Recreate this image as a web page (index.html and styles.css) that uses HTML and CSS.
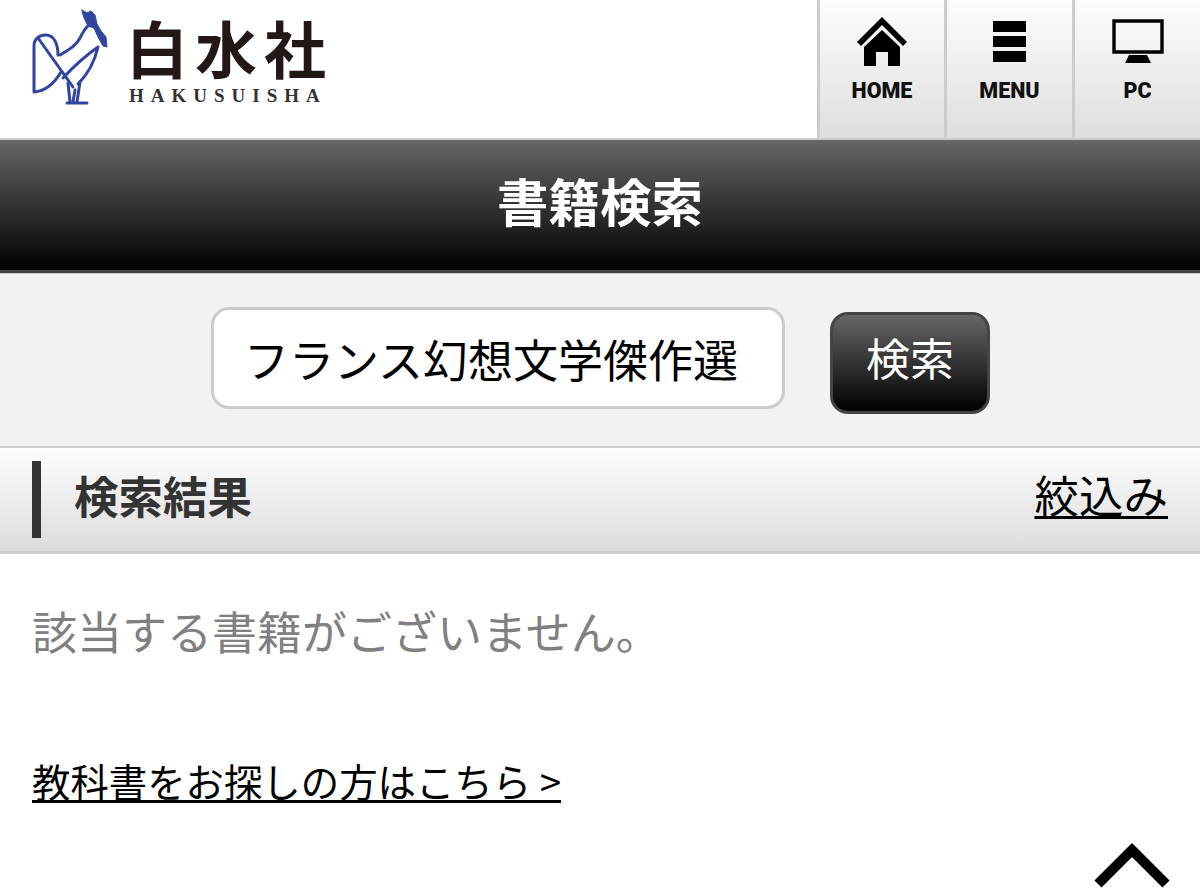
FILE: index.html
```html
<!DOCTYPE html>
<html lang="ja">
<head>
<meta charset="utf-8">
<title>書籍検索 | 白水社</title>
<link rel="stylesheet" href="styles.css">
</head>
<body>
<header class="site-header">
  <a class="logo" href="#">
    <svg class="logo-mark" width="78" height="98" viewBox="31 8 78 98" fill="none" stroke="#2f45a0" stroke-width="3" stroke-linejoin="round" stroke-linecap="round">
      <path d="M34 91 V46 C34 39 39 35 46 35 C54 35 58 44 58 55 M34 92 C46 91 54 84 61 72 M38 38 L73 87"/>
      <path d="M60 55 C68 50 76 46 80 38 C83 32 85 28 88 26"/>
      <path d="M98 47 C95 60 88 74 78 84 M98 47 C88 54 76 64 63 78"/>
      <path d="M68 83 L70 102 M75 90 L73 102 M80 82 L77 102 M67 103 H75 M77 103 H87"/>
      <path fill="#2f45a0" stroke-width="1" d="M82 10 L87 13 L91 11 L95 15 L97 24 L101 31 L106 37 L107 47 L103 46 L98 37 L94 28 L88 26 L84 18 Z"/>
    </svg>
    <div class="logo-text">
      <div class="logo-kanji">白水社</div>
      <div class="logo-roman">HAKUSUISHA</div>
    </div>
  </a>
  <nav class="top-nav">
    <a class="nav-item" href="#">
      <svg width="52" height="50" viewBox="0 0 52 50"><path fill="#000" d="M26 0 L51 25 L47 29 L26 8 L5 29 L1 25 Z"/><path fill="#000" d="M26 13 L44 30 L44 49 L32 49 L32 35 L20 35 L20 49 L8 49 L8 30 Z"/></svg>
      <span class="nav-label">HOME</span>
    </a>
    <a class="nav-item" href="#">
      <svg width="34" height="42" viewBox="0 0 34 42"><path fill="#000" d="M0 0H33V11H0ZM0 15H33V26H0ZM0 30H33V41H0Z"/></svg>
      <span class="nav-label">MENU</span>
    </a>
    <a class="nav-item" href="#">
      <svg width="52" height="46" viewBox="0 0 52 46"><path fill="none" stroke="#000" stroke-width="3.4" d="M2 2H50V33H2Z"/><path fill="#000" d="M17 36H35L39 44H13Z"/></svg>
      <span class="nav-label">PC</span>
    </a>
  </nav>
</header>

<h1 class="page-title">書籍検索</h1>

<form class="search-form">
  <input class="search-input" type="text" value="フランス幻想文学傑作選">
  <button class="search-button" type="button">検索</button>
</form>

<div class="result-bar">
  <h2 class="result-title">検索結果</h2>
  <a class="filter-link" href="#">絞込み</a>
</div>

<main class="content">
  <p class="no-result">該当する書籍がございません。</p>
  <a class="textbook-link" href="#">教科書をお探しの方はこちら &gt;</a>
  <div class="to-top">
    <svg width="76" height="48" viewBox="0 0 76 48"><path fill="none" stroke="#000" stroke-width="10" d="M4 43 L38 9 L72 43"/></svg>
  </div>
</main>
</body>
</html>
```
FILE: styles.css
```css
* { box-sizing: border-box; }
html, body { margin: 0; padding: 0; }
body {
  height: 894px;
  overflow: hidden;
  background: #fff;
  color: #000;
  font-family: "Noto Sans CJK JP", "Noto Sans", sans-serif;
}
a { color: inherit; }

.site-header {
  display: flex;
  justify-content: space-between;
  height: 140px;
  border-bottom: 2px solid #ccc;
}
.logo {
  display: flex;
  align-items: flex-start;
  padding: 8px 0 0 31px;
  text-decoration: none;
}
.logo-mark { flex: none; }
.logo-text {
  margin: 8px 0 0 20px;
  color: #231815;
}
.logo-kanji {
  margin-left: -3px;
  font-size: 62px;
  line-height: 62px;
  font-weight: 700;
  letter-spacing: 7px;
  height: 70px;
}
.logo-roman {
  font-family: "Liberation Serif", serif;
  font-weight: 700;
  font-size: 19px;
  line-height: 20px;
  letter-spacing: 7px;
  color: #333;
}

.top-nav { display: flex; }
.nav-item {
  width: 128px;
  height: 138px;
  padding-top: 17px;
  display: flex;
  flex-direction: column;
  align-items: center;
  text-decoration: none;
  background: linear-gradient(#fdfdfd, #dedede);
  border-left: 3px solid #ccc;
}
.nav-item:first-child { width: 127px; }
.nav-item svg { flex: none; height: 50px; }
.nav-label {
  margin-top: 11px;
  font-family: Roboto, sans-serif;
  font-weight: 900;
  font-size: 21.5px;
  line-height: 26px;
  letter-spacing: 0;
  color: #111;
}

.page-title {
  margin: 0;
  height: 133px;
  padding-bottom: 11px;
  display: flex;
  align-items: center;
  justify-content: center;
  font-size: 51.5px;
  font-weight: 700;
  color: #fff;
  background: linear-gradient(#666, #000);
  border-bottom: 3px solid #444;
}

.search-form {
  height: 173px;
  padding: 33px 210px 0 211px;
  display: flex;
  align-items: flex-start;
  background: #f2f2f2;
  border-top: 1px solid #ccc;
}
.search-input {
  width: 574px;
  height: 102px;
  padding: 0 20px 0 30px;
  border: 3px solid #ccc;
  border-radius: 18px;
  background: #fff;
  color: #000;
  font-family: inherit;
  font-size: 45px;
  outline: none;
}
.search-button {
  width: 160px;
  height: 102px;
  margin: 5px 0 0 45px;
  border: 3px solid #444;
  border-radius: 18px;
  background: linear-gradient(#666, #000);
  color: #fff;
  font-family: inherit;
  font-size: 44px;
  padding: 0 0 12px;
}

.result-bar {
  height: 108px;
  padding: 14px 32px 14px 32px;
  display: flex;
  align-items: center;
  justify-content: space-between;
  border-top: 2px solid #ccc;
  border-bottom: 3px solid #ccc;
  background: linear-gradient(#fdfdfd, #dcdcdc);
}
.result-title {
  margin: 0;
  height: 77px;
  padding: 0 0 10px 33px;
  display: flex;
  align-items: center;
  border-left: 9px solid #333;
  font-size: 44.5px;
  font-weight: 700;
  color: #333;
}
.filter-link {
  margin-bottom: 11px;
  font-size: 44.5px;
  line-height: 60px;
  text-decoration-thickness: 3px;
  text-underline-offset: 3px;
}

.content {
  padding: 45px 32px 0;
}
.no-result {
  margin: 0;
  font-size: 45px;
  line-height: 64px;
  color: #808080;
}
.textbook-link {
  display: block;
  width: max-content;
  margin-top: 89px;
  font-size: 38.4px;
  line-height: 56px;
  text-decoration-thickness: 3px;
  text-underline-offset: 3px;
}
.to-top {
  margin: 33px -2px 0 0;
  display: flex;
  justify-content: flex-end;
}
```
